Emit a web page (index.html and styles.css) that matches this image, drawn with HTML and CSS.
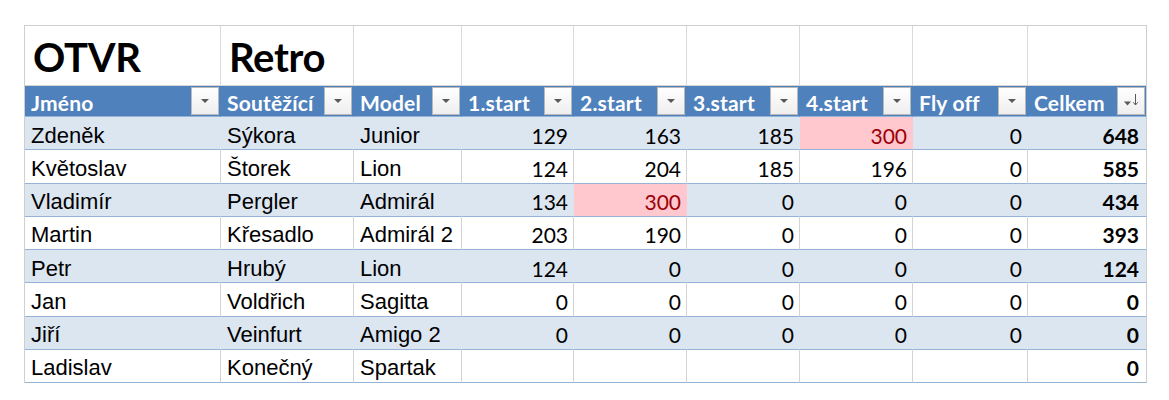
FILE: index.html
```html
<!DOCTYPE html>
<html lang="cs">
<head>
<meta charset="utf-8">
<title>OTVR Retro</title>
<link rel="stylesheet" href="styles.css">
</head>
<body>
<table class="sheet">
  <colgroup>
    <col class="w-name"><col class="w-surname"><col class="w-model">
    <col class="w-s1"><col class="w-s2"><col class="w-s3"><col class="w-s4">
    <col class="w-fly"><col class="w-total">
  </colgroup>
  <tr class="title-row">
    <td class="title">OTVR</td><td class="title">Retro</td>
    <td></td><td></td><td></td><td></td><td></td><td></td><td></td>
  </tr>
  <tr class="head">
    <th><div class="hcell"><span>Jméno</span><span class="filter"><svg viewBox="0 0 26 26" width="26" height="26"><polygon points="9,11 17,11 13,15" /></svg></span></div></th>
    <th><div class="hcell"><span>Soutěžící</span><span class="filter"><svg viewBox="0 0 26 26" width="26" height="26"><polygon points="9,11 17,11 13,15" /></svg></span></div></th>
    <th><div class="hcell"><span>Model</span><span class="filter"><svg viewBox="0 0 26 26" width="26" height="26"><polygon points="9,11 17,11 13,15" /></svg></span></div></th>
    <th><div class="hcell"><span>1.start</span><span class="filter"><svg viewBox="0 0 26 26" width="26" height="26"><polygon points="9,11 17,11 13,15" /></svg></span></div></th>
    <th><div class="hcell"><span>2.start</span><span class="filter"><svg viewBox="0 0 26 26" width="26" height="26"><polygon points="9,11 17,11 13,15" /></svg></span></div></th>
    <th><div class="hcell"><span>3.start</span><span class="filter"><svg viewBox="0 0 26 26" width="26" height="26"><polygon points="9,11 17,11 13,15" /></svg></span></div></th>
    <th><div class="hcell"><span>4.start</span><span class="filter"><svg viewBox="0 0 26 26" width="26" height="26"><polygon points="9,11 17,11 13,15" /></svg></span></div></th>
    <th><div class="hcell"><span>Fly off</span><span class="filter"><svg viewBox="0 0 26 26" width="26" height="26"><polygon points="9,11 17,11 13,15" /></svg></span></div></th>
    <th><div class="hcell"><span>Celkem</span><span class="filter"><svg viewBox="0 0 26 26" width="26" height="26"><polygon points="6,13.5 13,13.5 9.5,17.5" /><line x1="17.5" y1="6" x2="17.5" y2="17" /><polyline points="15.3,14.3 17.5,17 19.7,14.3" /></svg></span></div></th>
  </tr>
  <tr class="band">
    <td class="txt">Zdeněk</td><td class="txt">Sýkora</td><td class="txt">Junior</td>
    <td class="num">129</td><td class="num">163</td><td class="num">185</td><td class="num bad">300</td><td class="num">0</td><td class="num total">648</td>
  </tr>
  <tr>
    <td class="txt">Květoslav</td><td class="txt">Štorek</td><td class="txt">Lion</td>
    <td class="num">124</td><td class="num">204</td><td class="num">185</td><td class="num">196</td><td class="num">0</td><td class="num total">585</td>
  </tr>
  <tr class="band">
    <td class="txt">Vladimír</td><td class="txt">Pergler</td><td class="txt">Admirál</td>
    <td class="num">134</td><td class="num bad">300</td><td class="num">0</td><td class="num">0</td><td class="num">0</td><td class="num total">434</td>
  </tr>
  <tr>
    <td class="txt">Martin</td><td class="txt">Křesadlo</td><td class="txt">Admirál 2</td>
    <td class="num">203</td><td class="num">190</td><td class="num">0</td><td class="num">0</td><td class="num">0</td><td class="num total">393</td>
  </tr>
  <tr class="band">
    <td class="txt">Petr</td><td class="txt">Hrubý</td><td class="txt">Lion</td>
    <td class="num">124</td><td class="num">0</td><td class="num">0</td><td class="num">0</td><td class="num">0</td><td class="num total">124</td>
  </tr>
  <tr>
    <td class="txt">Jan</td><td class="txt">Voldřich</td><td class="txt">Sagitta</td>
    <td class="num">0</td><td class="num">0</td><td class="num">0</td><td class="num">0</td><td class="num">0</td><td class="num total">0</td>
  </tr>
  <tr class="band">
    <td class="txt">Jiří</td><td class="txt">Veinfurt</td><td class="txt">Amigo 2</td>
    <td class="num">0</td><td class="num">0</td><td class="num">0</td><td class="num">0</td><td class="num">0</td><td class="num total">0</td>
  </tr>
  <tr>
    <td class="txt">Ladislav</td><td class="txt">Konečný</td><td class="txt">Spartak</td>
    <td class="num"></td><td class="num"></td><td class="num"></td><td class="num"></td><td class="num"></td><td class="num total">0</td>
  </tr>
</table>
</body>
</html>
```

FILE: styles.css
```css
html, body {
  margin: 0;
  padding: 0;
  background: #ffffff;
}

body {
  padding: 25px 0 0 24px;
}

.sheet {
  border-collapse: separate;
  border-spacing: 0;
  table-layout: fixed;
  width: 1122px;
  border-left: 1px solid #cfcfcf;
  border-top: 1px solid #cfcfcf;
  font-family: "Liberation Sans", Arial, sans-serif;
  color: #000;
}

.w-name { width: 196px; }
.w-surname { width: 133px; }
.w-model { width: 108px; }
.w-s1 { width: 112px; }
.w-s2 { width: 113px; }
.w-s3 { width: 113px; }
.w-s4 { width: 113px; }
.w-fly { width: 115px; }
.w-total { width: 119px; }

td, th {
  padding: 0;
  box-sizing: border-box;
  overflow: hidden;
  white-space: nowrap;
}

/* title row */
.title-row td {
  height: 60px;
  border-right: 1px solid #dadada;
  border-bottom: 1px solid #d4d4d4;
  background: #fff;
  vertical-align: bottom;
}

.title {
  font-family: Lato, "Liberation Sans", sans-serif;
  font-weight: 700;
  font-size: 40px;
  line-height: 40px;
  padding: 0 0 8px 8px !important;
  letter-spacing: -0.3px;
}

/* header row */
.head th {
  height: 31px;
  background: #4f81bd;
  border-right: 1px solid #4f81bd;
  border-bottom: 1px solid #95b3d7;
  text-align: left;
  padding: 0;
}

.head th:last-child {
  border-right: 1px solid #cfcfcf;
}

.hcell {
  display: flex;
  align-items: center;
  justify-content: space-between;
  height: 30px;
  padding: 0 1px 0 6px;
  font-family: Lato, "Liberation Sans", sans-serif;
  font-weight: 700;
  font-size: 21px;
  color: #ffffff;
  letter-spacing: 0.2px;
}

.hcell > span:first-child {
  padding-top: 2px;
}

.filter {
  display: block;
  width: 26px;
  height: 26px;
  border: 1px solid #b9b9b9;
  background: linear-gradient(#ffffff, #eeeeee);
  flex: none;
}

.filter svg {
  display: block;
}

.filter polygon {
  fill: #595959;
}

.filter line,
.filter polyline {
  stroke: #595959;
  stroke-width: 1;
  fill: none;
}

/* data rows */
tr td.txt,
tr td.num {
  height: 33.25px;
  border-right: 1px solid #d4d4d4;
  border-bottom: 1px solid #95b3d7;
  background: #ffffff;
  vertical-align: middle;
  padding-top: 5px;
}

tr td:last-child {
  border-right: 1px solid #cfcfcf;
}

.band td.txt,
.band td.num {
  background: #dce6f1;
  border-right-color: #dce6f1;
}

.band td:last-child {
  border-right-color: #cfcfcf;
}

.txt {
  font-family: "Liberation Sans", Arial, sans-serif;
  font-size: 22px;
  line-height: 26px;
  padding-left: 6px !important;
  text-align: left;
}

.num {
  font-family: Lato, "Liberation Sans", sans-serif;
  font-size: 21px;
  line-height: 26px;
  text-align: right;
  padding-right: 5px !important;
}

.total {
  font-weight: 700;
  padding-right: 7px !important;
}

td.bad {
  background: #ffc7ce !important;
  border-right-color: #ffc7ce !important;
  color: #9c0006;
}
```
